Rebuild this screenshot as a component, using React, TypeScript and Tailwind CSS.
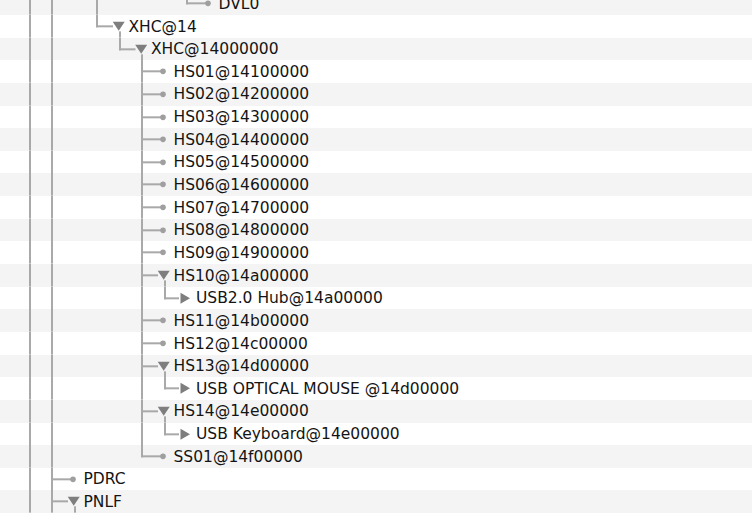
import React from 'react'

// one row of the registry outline
type Kind = 'leaf' | 'open' | 'closed'

interface Row {
  level: number
  label: string
  kind: Kind
  last?: boolean
  guides: number[]
}

const ROW_H = 22.65
const MID = ROW_H / 2
const LINE = '#a9a9a9'
const ARROW = '#7e7e7e'
const DOT = '#9f9f9f'

const connX = (level: number) => 29.5 + 22.5 * level
const textX = (level: number) => connX(level) + 31.5
// snap the 2px guide lines onto whole pixels so they stay crisp
const lineX = (level: number) => Math.round(connX(level)) - 1

const hs = (n: string, kind: Kind = 'leaf', last = false): Row => ({
  level: 5,
  label: n,
  kind,
  last,
  guides: [0, 1],
})

const usb = (label: string): Row => ({ level: 6, label, kind: 'closed', last: true, guides: [0, 1, 5] })

const rows: Row[] = [
  { level: 7, label: 'DVL0', kind: 'leaf', last: true, guides: [0, 1, 3] },
  { level: 3, label: 'XHC@14', kind: 'open', last: true, guides: [0, 1] },
  { level: 4, label: 'XHC@14000000', kind: 'open', last: true, guides: [0, 1] },
  hs('HS01@14100000'),
  hs('HS02@14200000'),
  hs('HS03@14300000'),
  hs('HS04@14400000'),
  hs('HS05@14500000'),
  hs('HS06@14600000'),
  hs('HS07@14700000'),
  hs('HS08@14800000'),
  hs('HS09@14900000'),
  hs('HS10@14a00000', 'open'),
  usb('USB2.0 Hub@14a00000'),
  hs('HS11@14b00000'),
  hs('HS12@14c00000'),
  hs('HS13@14d00000', 'open'),
  usb('USB OPTICAL MOUSE @14d00000'),
  hs('HS14@14e00000', 'open'),
  usb('USB Keyboard@14e00000'),
  hs('SS01@14f00000', 'leaf', true),
  { level: 1, label: 'PDRC', kind: 'leaf', guides: [0] },
  { level: 1, label: 'PNLF', kind: 'open', guides: [0] },
]

function Gutter({ row }: { row: Row }) {
  const tx = textX(row.level)
  const lx = lineX(row.level)
  const lineEnd = row.kind === 'leaf' ? tx - 12 : row.kind === 'open' ? tx - 15.5 : tx - 17

  return (
    <svg width={tx} height={ROW_H} className="shrink-0">
      {row.guides.map((g) => (
        <rect key={g} x={lineX(g)} y={0} width={2} height={ROW_H} fill={LINE} />
      ))}
      <rect x={lx} y={0} width={2} height={row.last ? MID + 1 : ROW_H} fill={LINE} />
      <rect x={lx} y={MID - 1} width={lineEnd - lx} height={2} fill={LINE} />
      {row.kind === 'leaf' && <circle cx={tx - 10.5} cy={MID} r={2.8} fill={DOT} />}
      {row.kind === 'open' && (
        <>
          <polygon
            points={`${tx - 15.8},${MID - 4.6} ${tx - 3.8},${MID - 4.6} ${tx - 9.8},${MID + 4.4}`}
            fill={ARROW}
          />
          <rect
            x={lineX(row.level + 1)}
            y={MID + 5}
            width={2}
            height={ROW_H - MID - 5}
            fill={LINE}
          />
        </>
      )}
      {row.kind === 'closed' && (
        <polygon points={`${tx - 15.5},${MID - 5.5} ${tx - 15.5},${MID + 5.5} ${tx - 6},${MID}`} fill={ARROW} />
      )}
    </svg>
  )
}

export default function App() {
  return (
    <div className="h-[514px] w-[752px] overflow-hidden bg-white">
      <div className="mt-[-7.65px] font-['DejaVu_Sans',sans-serif] text-[15.5px] text-[#141414]">
        {rows.map((row, idx) => (
          <div
            key={idx}
            className={`flex h-[22.65px] items-center ${idx % 2 === 0 ? 'bg-[#f4f4f4]' : 'bg-white'}`}
          >
            <Gutter row={row} />
            <span className="whitespace-nowrap leading-none pt-[2px]">{row.label}</span>
          </div>
        ))}
      </div>
    </div>
  )
}
